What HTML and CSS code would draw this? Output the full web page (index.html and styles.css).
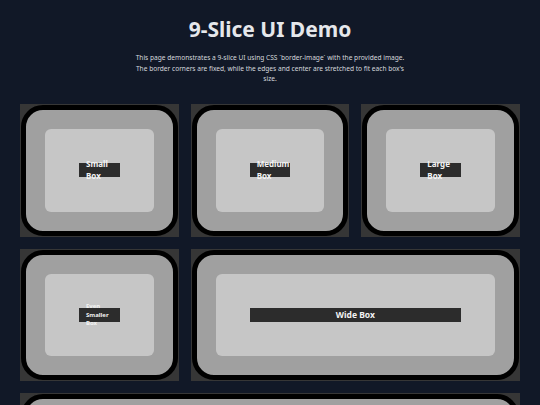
FILE: index.html
```html
<!DOCTYPE html>
<html lang="en">
<head>
<meta charset="utf-8">
<title>9-Slice UI Demo</title>
<link rel="stylesheet" href="styles.css">
</head>
<body>
<div class="page">
  <h1 class="title">9-Slice UI Demo</h1>
  <p class="intro">This page demonstrates a 9-slice UI using CSS `border-image` with the provided image. The border corners are fixed, while the edges and center are stretched to fit each box's size.</p>
  <div class="grid">
    <div class="box"><div class="frame"><div class="inner"><div class="label"><span>Small Box</span></div></div></div></div>
    <div class="box"><div class="frame"><div class="inner"><div class="label"><span>Medium Box</span></div></div></div></div>
    <div class="box"><div class="frame"><div class="inner"><div class="label"><span>Large Box</span></div></div></div></div>
    <div class="box"><div class="frame"><div class="inner"><div class="label label-tiny"><span>Even Smaller Box</span></div></div></div></div>
    <div class="box box-wide"><div class="frame"><div class="inner"><div class="label label-wide"><span>Wide Box</span></div></div></div></div>
    <div class="box box-full"><div class="frame"><div class="inner"></div></div></div>
  </div>
</div>
</body>
</html>
```
FILE: styles.css
```css
html, body {
  margin: 0;
  padding: 0;
  background: #111827;
  font-family: "Noto Sans", "Open Sans", sans-serif;
}
.page {
  padding: 15px 20px 20px;
}
.title {
  margin: 0;
  text-align: center;
  font-size: 21px;
  line-height: 28px;
  font-weight: 700;
  color: #e5e7eb;
}
.intro {
  margin: 10px auto 0;
  max-width: 280px;
  text-align: center;
  font-size: 6.6px;
  line-height: 10.5px;
  color: #d6d9de;
}
.grid {
  margin-top: 19.5px;
  display: grid;
  grid-template-columns: repeat(3, minmax(0, 1fr));
  grid-auto-rows: 132.5px;
  gap: 12px;
}
.box {
  background: #363636;
  padding: 1px;
  display: flex;
  min-width: 0;
}
.box-wide {
  grid-column: span 2;
}
.box-full {
  grid-column: span 3;
}
.frame {
  flex: 1;
  display: flex;
  min-width: 0;
  border: 5px solid #000;
  border-radius: 22px;
  background: #a0a0a0;
  padding: 19px;
}
.inner {
  flex: 1;
  display: flex;
  align-items: center;
  min-width: 0;
  background: #c6c6c6;
  border-radius: 6px;
  padding: 0 34px;
}
.label {
  flex: 1;
  min-width: 0;
  height: 14px;
  display: flex;
  align-items: center;
  background: #2c2c2c;
  color: #f3f3f3;
  font-size: 8px;
  line-height: 12px;
  font-weight: 700;
  padding: 0 7px;
  text-align: left;
}
.label span {
  width: 100%;
}
.label-tiny {
  font-size: 6px;
  line-height: 8.5px;
}
.label-wide {
  font-size: 8.5px;
  text-align: center;
}
```
